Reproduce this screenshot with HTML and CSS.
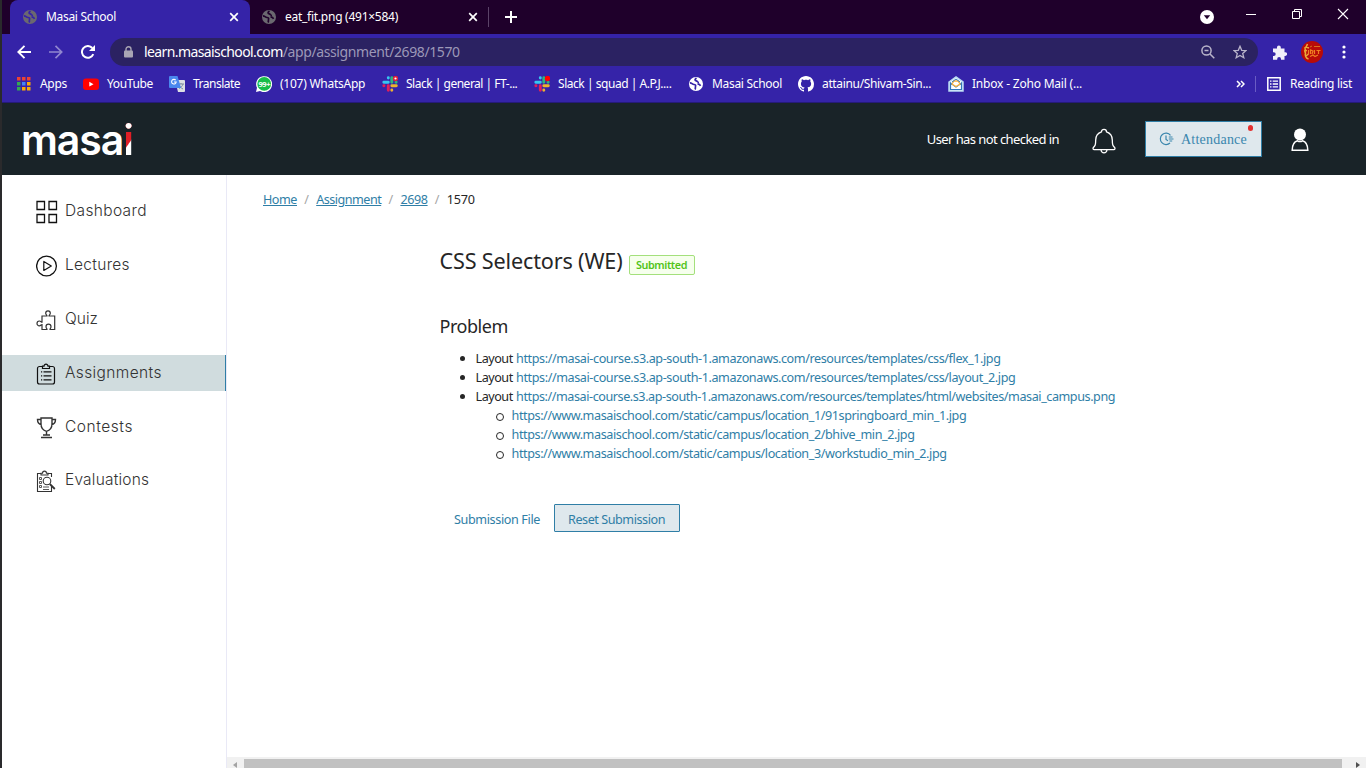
FILE: index.html
```html
<!DOCTYPE html>
<html lang="en">
<head>
<meta charset="utf-8">
<title>Masai School</title>
<link rel="stylesheet" href="styles.css">
</head>
<body>
<svg class="defs" width="0" height="0">
  <defs>
    <symbol id="globe" viewBox="0 0 14 14"><circle cx="7" cy="7" r="7" fill="currentColor"/><path d="M1 5.800c1.800 0 2.300 1.700 4 1.700 1.300 0 2 .8 1.500 2M7.500 1c-2 1.300-1.800 2.600-.3 2.900 1.400.3 1.400 1.500 2.800 1.600M6.500 9.500c-.3 1 .2 2-.5 3M8.500 7.200c1.500-.3 2.500.4 3 1.600" fill="none" stroke="var(--cut)" stroke-width="1.700"/></symbol>
    <symbol id="cross" viewBox="0 0 10 10"><path d="M1.200 1.200l7.600 7.600M8.800 1.200L1.200 8.800" stroke="#fff" stroke-width="1.700"/></symbol>
    <symbol id="slack" viewBox="0 0 16 16"><g fill="none" stroke-width="2.900" stroke-linecap="round"><path d="M1.800 6.300h4.500M6.300 1.800v.2" stroke="#36c5f0"/><path d="M9.800 1.800v4.500M14 6.300h.2" stroke="#2eb67d"/><path d="M9.800 9.800h4.500M9.800 14v.2" stroke="#ecb22e"/><path d="M6.300 9.800v4.500M1.800 9.800H2" stroke="#e01e5a"/></g></symbol>
  </defs>
</svg>
<div class="window">
  <header class="tabs">
    <div class="tab active"><svg class="fav on-active"><use href="#globe"/></svg><span class="t t-tab1">Masai School</span><svg class="close"><use href="#cross"/></svg></div>
    <div class="tab second"><svg class="fav"><use href="#globe"/></svg><span class="t t-tab2">eat_fit.png (491×584)</span><svg class="close"><use href="#cross"/></svg></div>
    <i class="tab-sep"></i>
    <svg class="plus" viewBox="0 0 12 12"><path d="M6 0v12M0 6h12" stroke="#fff" stroke-width="2"/></svg>
    <div class="controls">
      <svg class="c-menu" viewBox="0 0 14 14"><circle cx="7" cy="7" r="7" fill="#fff"/><path d="M3.800 5.200h6.400L7 9.300z" fill="#1f002b"/></svg>
      <svg class="c-min" viewBox="0 0 10 14"><path d="M0 7.500h10" stroke="#fff"/></svg>
      <svg class="c-max" viewBox="0 0 10 14"><path d="M.5 4.500h7v7h-7zM2.500 4.500v-2h7v7h-2" fill="none" stroke="#fff"/></svg>
      <svg class="c-close" viewBox="0 0 12 14"><path d="M1 2l10 10M11 2L1 12" stroke="#fff" stroke-width="1.100"/></svg>
    </div>
  </header>
  <nav class="toolbar">
    <svg class="nav-ic" viewBox="0 0 14 14"><path d="M14 7H1.500M7.500.800L1.300 7l6.200 6.200" fill="none" stroke="#fff" stroke-width="1.900"/></svg>
    <svg class="nav-ic dim" viewBox="0 0 14 14"><path d="M0 7h12.500M6.500.800L12.700 7l-6.200 6.200" fill="none" stroke="#fff" stroke-width="1.700"/></svg>
    <svg class="nav-ic" viewBox="0 0 14 14"><path d="M12.300 9.200A5.900 5.900 0 1 1 11.300 3" fill="none" stroke="#fff" stroke-width="2"/><path d="M14 0v6H8z" fill="#fff"/></svg>
    <div class="omnibox">
      <svg class="lock" viewBox="0 0 9 12"><path d="M2 5V3.200a2.500 2.500 0 0 1 5 0V5" fill="none" stroke="#a9a5b4" stroke-width="1.400"/><rect y="4.500" width="9" height="7" rx="1" fill="#a9a5b4"/></svg>
      <span class="url"><span class="t t-host">learn.masaischool.com</span><span class="t t-path">/app/assignment/2698/1570</span></span>
      <svg class="mag" viewBox="0 0 14 14"><circle cx="5.500" cy="5.500" r="4.600" fill="none" stroke="#b9b4ca" stroke-width="1.500"/><path d="M3.500 5.500h4M9 9l4.300 4.300" stroke="#b9b4ca" stroke-width="1.500"/></svg>
      <svg class="star" viewBox="0 0 14 14"><path d="M7 1.300l1.700 4 4.300.3-3.300 2.800 1.100 4.300L7 10.400l-3.800 2.300 1.100-4.300L1 5.600l4.300-.3z" fill="none" stroke="#b9b4ca" stroke-width="1.300"/></svg>
    </div>
    <svg class="puzzle" viewBox="0 0 15 15"><path d="M1 3.500h4V2.300a1.900 1.900 0 0 1 3.800 0v1.200h3.700v3.700h.7a1.900 1.900 0 0 1 0 3.800h-.7v3.700H9v-.8a1.900 1.900 0 0 0-3.800 0v.8H1V11h.8a1.900 1.900 0 0 0 0-3.800H1z" fill="#f1effa"/></svg>
    <svg class="avatar" viewBox="0 0 22 22"><circle cx="11" cy="11" r="11" fill="#b80b08"/><path d="M6.500 3c-1 2-.8 3-2.500 4 1 2-1 3 .5 5 -.5 2 0 5 3 6M3 10l3-.5M5 15l2.500-2M5 6l3 1" fill="none" stroke="#e9a93a" stroke-width="1.600"/><path d="M9 6l2-1M13 5.500h6" stroke="#d9701b"/><path d="M7.500 9v4M9.500 13V9l2.500 1-1 3M13.500 9v4M15.500 9.500h4M17.500 9v4M9 15.500l3-1.500 2 1.500 3-1.500" fill="none" stroke="#f07f22" stroke-width="1.200"/></svg>
    <svg class="kebab" viewBox="0 0 4 14"><g fill="#fff"><circle cx="2" cy="2" r="1.600"/><circle cx="2" cy="7" r="1.600"/><circle cx="2" cy="12" r="1.600"/></g></svg>
  </nav>
  <nav class="bookmarks">
    <a class="bm b1"><svg viewBox="0 0 14 14"><g fill="#ea4335"><path d="M0 0h3.500v3.500H0zM5 0h3.500v3.500H5zM10 0h3.500v3.500H10z"/></g><path d="M0 5h3.500v3.500H0zM0 10h3.500v3.500H0z" fill="#34a853"/><path d="M5 5h3.500v3.500H5z" fill="#4285f4"/><path d="M5 10h3.500v3.500H5zM10 5h3.500v3.500H10zM10 10h3.500v3.500H10z" fill="#fbab05"/></svg><span class="t t-b1">Apps</span></a>
    <a class="bm b2"><svg viewBox="0 0 16 16"><rect y="2.500" width="16" height="11.500" rx="3" fill="#f00"/><path d="M6.300 5.800l4.200 2.400-4.200 2.400z" fill="#fff"/></svg><span class="t t-b2">YouTube</span></a>
    <a class="bm b3"><svg viewBox="0 0 16 16"><path d="M6 4h9a1 1 0 0 1 1 1v10a1 1 0 0 1-1 1H9z" fill="#dcdfe3"/><path d="M9 8h6M12 7v1M14 8c-.5 2-2 3.500-4 4.500M10 9c.6 1.500 2 3 4 4" fill="none" stroke="#7e8da0"/><path d="M1 0h7.500L12 12H1a1 1 0 0 1-1-1V1a1 1 0 0 1 1-1z" fill="#4a88ee"/><path d="M6.700 4.200A2.300 2.300 0 1 0 7.200 6H5" fill="none" stroke="#fff" stroke-width="1.100"/></svg><span class="t t-b3">Translate</span></a>
    <a class="bm b4"><svg viewBox="0 0 16 16"><path d="M0 16l1-4.200A8 8 0 1 1 4 15z" fill="#fff"/><circle cx="8.200" cy="7.900" r="6.900" fill="#18bd49"/><text x="8.300" y="10.800" class="badge-num">99+</text></svg><span class="t t-b4">(107) WhatsApp</span></a>
    <a class="bm b5"><svg viewBox="0 0 16 16"><use href="#slack"/><circle cx="13.500" cy="2.500" r="2.700" fill="#e01e3a"/><circle cx="13.500" cy="2.500" r="1.100" fill="#fff"/></svg><span class="t t-b5">Slack | general | FT-...</span></a>
    <a class="bm b6"><svg viewBox="0 0 16 16"><use href="#slack"/><circle cx="13.500" cy="2.500" r="2.700" fill="#f00"/></svg><span class="t t-b6">Slack | squad | A.P.J....</span></a>
    <a class="bm b7"><svg class="on-active" viewBox="0 0 14 14"><use href="#globe"/></svg><span class="t t-tab1">Masai School</span></a>
    <a class="bm b8"><svg viewBox="0 0 16 16"><path fill="#fff" d="M8 0C3.580 0 0 3.580 0 8c0 3.540 2.290 6.530 5.470 7.590.4.070.55-.17.55-.38 0-.19-.01-.82-.01-1.490-2.010.37-2.530-.49-2.690-.94-.09-.23-.48-.94-.82-1.130-.28-.15-.68-.52-.01-.53.63-.01 1.080.58 1.230.82.72 1.210 1.870.87 2.330.66.07-.52.28-.87.51-1.070-1.780-.2-3.640-.89-3.640-3.950 0-.87.31-1.590.82-2.150-.08-.2-.36-1.020.08-2.120 0 0 .67-.21 2.200.82.64-.18 1.320-.27 2-.27s1.360.09 2 .27c1.530-1.040 2.200-.82 2.200-.82.44 1.100.16 1.920.08 2.120.51.56.82 1.270.82 2.150 0 3.070-1.870 3.750-3.650 3.950.29.25.54.73.54 1.480 0 1.070-.01 1.930-.01 2.200 0 .21.15.46.55.38A8 8 0 0 0 16 8c0-4.420-3.580-8-8-8z"/></svg><span class="t t-b8">attainu/Shivam-Sin...</span></a>
    <a class="bm b9"><svg viewBox="0 0 16 16"><path d="M1 6l7-5 7 5v9H1z" fill="#fff" stroke="#b9dcf3" stroke-width="1.500"/><path d="M2.500 7v6.500h11V7L8 11z" fill="#fff" stroke="#3179bd" stroke-width="1.200"/><path d="M4 8l2-3h4l2 3-4 2.500z" fill="#fff" stroke="#f6b13d" stroke-width="1.300"/><path d="M4 6l4-3 4 3" fill="none" stroke="#3179bd"/></svg><span class="t t-b9">Inbox - Zoho Mail (...</span></a>
    <div class="bm-end">
      <svg class="more" viewBox="0 0 9 8"><path d="M1 1l3 3-3 3M5 1l3 3-3 3" fill="none" stroke="#fff" stroke-width="1.500"/></svg>
      <i class="bm-sep"></i>
      <svg class="rl" viewBox="0 0 14 14"><path d="M.8.800h12.400v12.400H.8z" fill="none" stroke="#fff" stroke-width="1.500"/><path d="M3 4.200h1.500M3 7h1.500M3 9.800h1.500M5.700 4.200H11M5.700 7H11M5.700 9.800H11" stroke="#fff" stroke-width="1.300"/></svg>
      <span class="t t-rl">Reading list</span>
    </div>
  </nav>
  <header class="app-bar">
    <div class="logo"><span class="t">masa<span class="logo-i">i</span></span></div>
    <div class="app-right">
      <span class="t t-check">User has not checked in</span>
      <svg class="bell" viewBox="0 0 24 26"><path d="M9.500 3.800a2.500 2.500 0 0 1 5 0c4 1.300 5.800 4.500 5.800 8.200 0 5 .6 5.700 2.300 7.500.8 1 .3 2.200-.8 2.200H2.200c-1.100 0-1.600-1.200-.8-2.200C3.100 17.700 3.700 17 3.700 12c0-3.700 1.800-6.900 5.800-8.200zM9 22c.3 1.800 1.300 2.800 3 2.800s2.700-1 3-2.800" fill="none" stroke="#fff" stroke-width="1.300"/></svg>
      <div class="attend"><svg viewBox="0 0 15 14"><path d="M11.500 3.300A5.700 5.700 0 1 0 11 11M7 3.500v4l2 1.200M9.800 5h3.700M9.800 7h4.700M10.500 9h2.700" fill="none" stroke="#3a86ad" stroke-width="1.200"/></svg><span class="t t-att">Attendance</span><i class="dot"></i></div>
      <svg class="user" viewBox="0 0 18 24"><circle cx="9" cy="6.500" r="6" fill="#fff"/><path d="M1.200 22.300c0-5 2-8.500 5.300-9.500 1.600 1 3.400 1 5 0 3.300 1 5.300 4.500 5.300 9.500z" fill="none" stroke="#fff" stroke-width="1.500"/></svg>
    </div>
  </header>
  <div class="body">
    <aside class="side">
      <a class="item low"><svg viewBox="0 0 22 24"><path d="M1 1.500h7.500v8H1zM13 1.500h7.500v8H13zM1 14.500h7.500v8H1zM13 14.500h7.500v8H13z" fill="none" stroke="#111" stroke-width="1.300"/></svg><span class="t t-s1">Dashboard</span></a>
      <a class="item low"><svg viewBox="0 0 22 24"><circle cx="10.500" cy="12" r="9.900" fill="none" stroke="#111" stroke-width="1.300"/><path d="M7.800 7.500v9l7.500-4.500z" fill="none" stroke="#111" stroke-width="1.200" stroke-linejoin="round"/></svg><span class="t t-s2">Lectures</span></a>
      <a class="item low"><svg viewBox="0 0 22 24"><path d="M6 8h5c0-1-1.300-1.200-1.300-2.800a2.300 2.300 0 0 1 4.600 0C14.300 6.800 13 7 13 8h5.700v13.500H14c0-1 1-1.200 1-2.800a2.500 2.500 0 0 0-5 0c0 1.600 1 1.800 1 2.800H6v-5c-.8 0-1.200 1.300-2.600 1.300a2.400 2.400 0 0 1 0-4.800c1.400 0 1.800 1.200 2.600 1.200z" fill="none" stroke="#333" stroke-width="1.200"/></svg><span class="t">Quiz</span></a>
      <a class="item sel low"><svg viewBox="0 0 22 24"><path d="M6 4.500H3.500a2 2 0 0 0-2 2V20a2 2 0 0 0 2 2h13a2 2 0 0 0 2-2V6.500a2 2 0 0 0-2-2H14M6.500 6.500h7V4.200h-1.500c0-2.800-4-2.800-4 0H6.500z" fill="none" stroke="#111" stroke-width="1.200"/><path d="M5 9.800h1.200M5 13.800h1.200M5 17.800h1.200M7.500 9.800h8M7.500 13.800h8M7.500 17.800h8" stroke="#111" stroke-width="1.200"/></svg><span class="t t-s4">Assignments</span></a>
      <a class="item low"><svg viewBox="0 0 22 24"><path d="M5 2h11v6c0 4-2 6.300-5.500 7.300C7 14.300 5 12 5 8zM5 3.500H1.500C1.500 7 3 8.200 5.500 8.500M16 3.500h3.500c0 3.500-1.500 4.700-4 5M10.500 15.300V19M7 19h7M5 21.500h11" fill="none" stroke="#333" stroke-width="1.400"/></svg><span class="t t-s5">Contests</span></a>
      <a class="item low last"><svg viewBox="0 0 22 24"><path d="M5 4.500H1.500v18h14V17M15.500 8V4.500H12M5 6h7V4.200h-1.500c0-2.800-4-2.800-4 0H5z" fill="none" stroke="#333" stroke-width="1.100"/><path d="M3.500 8.500h2v2h-2zM3.500 12.500h2v2h-2zM3.500 16.500h2v2h-2zM7 18h6M7 20.500h6" fill="none" stroke="#444" stroke-width=".9"/><circle cx="11" cy="12" r="3.800" fill="none" stroke="#333" stroke-width="1.100"/><path d="M13.800 15l5 5" stroke="#333" stroke-width="1.800"/></svg><span class="t t-s6">Evaluations</span></a>
    </aside>
    <main class="main">
      <div class="crumbs"><a class="t t-c1">Home</a><i>/</i><a class="t t-c2">Assignment</a><i>/</i><a class="t t-c3">2698</a><i>/</i><span class="t t-c4">1570</span></div>
      <section class="article">
        <div class="title-row"><h1><span class="t t-h1">CSS Selectors (WE)</span></h1><span class="tag"><span class="t t-tag">Submitted</span></span></div>
        <h2><span class="t t-h2">Problem</span></h2>
        <ul>
          <li><span class="t t-l0">Layout</span> <a class="t t-l1">https://masai-course.s3.ap-south-1.amazonaws.com/resources/templates/css/flex_1.jpg</a></li>
          <li><span class="t t-l0">Layout</span> <a class="t t-l1">https://masai-course.s3.ap-south-1.amazonaws.com/resources/templates/css/layout_2.jpg</a></li>
          <li><span class="t t-l0">Layout</span> <a class="t t-l3">https://masai-course.s3.ap-south-1.amazonaws.com/resources/templates/html/websites/masai_campus.png</a>
            <ul>
              <li><a class="t t-l4">https://www.masaischool.com/static/campus/location_1/91springboard_min_1.jpg</a></li>
              <li><a class="t t-l4">https://www.masaischool.com/static/campus/location_2/bhive_min_2.jpg</a></li>
              <li><a class="t t-l4">https://www.masaischool.com/static/campus/location_3/workstudio_min_2.jpg</a></li>
            </ul>
          </li>
        </ul>
        <div class="actions"><a class="t t-a1">Submission File</a><a class="btn"><span class="t t-a2">Reset Submission</span></a></div>
      </section>
      <div class="hscroll"><i class="arr left"></i><i class="thumb"></i><i class="arr right"></i></div>
    </main>
  </div>
</div>
</body>
</html>
```
FILE: styles.css
```css
* { box-sizing: border-box; }
body { margin: 0; width: 1366px; height: 768px; overflow: hidden; font-family: "Noto Sans", sans-serif; background: #2a2a2c; }
.defs { position: absolute; }
svg { display: block; flex: none; }
.t { white-space: nowrap; }
.window { width: 1364px; height: 768px; margin-left: 2px; display: flex; flex-direction: column; background: #fff; }

/* tab strip */
.tabs { height: 34px; background: #1f002b; display: flex; align-items: center; padding-left: 8px; color: #fff; font-size: 12px; flex: none; }
.tab { display: flex; align-items: center; width: 240px; height: 34px; padding: 0 11px 0 13px; }
.tab.active { background: #3523a8; border-radius: 8px 8px 0 0; }
.tab.second { width: 239px; padding: 0 11px 0 12px; }
.tab .t { padding-bottom: 1px; }
.fav { width: 14px; height: 14px; margin-right: 9px; color: #6b6870; --cut: #1f002b; }
.on-active { --cut: #3523a8; }
.t-tab1 { letter-spacing: -.31px; }
.t-tab2 { letter-spacing: -.26px; }
.close { width: 10px; height: 10px; margin-left: auto; }
.tab-sep { width: 1px; height: 20px; background: #5b4368; margin: 0 16px 0 -1px; }
.plus { width: 12px; height: 12px; }
.controls { margin-left: auto; display: flex; align-items: center; padding-right: 17px; height: 28px; }
.c-menu { width: 14px; height: 14px; margin: 0 32px 0 0; }
.c-min { width: 10px; height: 14px; margin: -6px 36px 0 0; }
.c-max { width: 10px; height: 14px; margin: -6px 35px 0 0; }
.c-close { width: 12px; height: 14px; margin-top: -6px; }

/* toolbar */
.toolbar { height: 36px; background: #3523a8; display: flex; align-items: center; flex: none; padding-left: 15px; }
.nav-ic { width: 14px; height: 14px; margin-right: 18px; }
.dim { opacity: .45; }
.omnibox { width: 1148px; height: 28px; border-radius: 14px; background: #2b2262; display: flex; align-items: center; padding: 0 11px 0 14px; margin-left: -3px; }
.lock { width: 9px; height: 12px; margin-right: 11px; }
.url { font-size: 14px; line-height: 18px; color: #fff; flex: 1; display: flex; }
.t-host { letter-spacing: -.6px; }
.t-path { color: #9c98b8; letter-spacing: -.393px; }
.mag { width: 14px; height: 14px; margin-right: 18px; }
.star { width: 14px; height: 14px; }
.puzzle { width: 15px; height: 15px; margin-left: 14px; }
.avatar { width: 22px; height: 22px; margin-left: 14px; }
.kebab { width: 4px; height: 14px; margin-left: 19px; }

/* bookmarks */
.bookmarks { height: 33px; background: #3523a8; border-bottom: 1px solid #251a78; display: flex; align-items: center; color: #fff; font-size: 12px; flex: none; padding: 0 0 4px 15px; }
.bookmarks .t { padding-bottom: 1px; }
.bm { display: flex; align-items: center; }
.bm svg { width: 16px; height: 16px; margin-right: 8px; }
.bm.b1 svg, .bm.b7 svg { width: 14px; height: 14px; margin-right: 9px; }
.b1 { width: 66px; } .b2 { width: 86px; } .b3 { width: 87px; } .b4 { width: 126px; } .b5 { width: 152px; }
.b6 { width: 155px; } .b7 { width: 109px; } .b8 { width: 150px; }
.t-b1 { letter-spacing: -.3px; }
.t-b2 { letter-spacing: -.36px; }
.t-b3 { letter-spacing: -.5px; }
.t-b4 { letter-spacing: -.25px; }
.t-b5 { letter-spacing: -.49px; }
.t-b6 { letter-spacing: -.46px; }
.t-b8 { letter-spacing: -.347px; }
.t-b9 { letter-spacing: -.2px; }
.t-rl { letter-spacing: -.3px; }
.bm-end { margin-left: auto; display: flex; align-items: center; padding-right: 14px; }
.more { width: 9px; height: 8px; }
.bm-sep { width: 1px; height: 16px; background: #6a5cc4; margin: 0 11px 0 10px; }
.rl { width: 14px; height: 14px; margin-right: 9px; }
.badge-num { font: bold 7.5px "Noto Sans", sans-serif; fill: #fff; text-anchor: middle; letter-spacing: -.4px; }

/* application bar */
.app-bar { height: 72px; background: #192328; display: flex; align-items: center; justify-content: space-between; flex: none; color: #fff; }
.logo { padding: 1px 0 0 19px; font: 600 41px/60px Inter, sans-serif; letter-spacing: -1.100px; }
.logo-i { color: transparent; background: linear-gradient(#fff, #fff) 0 0 / 100% 16px no-repeat, linear-gradient(125deg, #e01f26 calc(50% + 1px), #fff calc(50% + 2px)); -webkit-background-clip: text; background-clip: text; padding-right: 3px; }
.app-right { display: flex; align-items: center; font-size: 13px; }
.t-check { letter-spacing: -.58px; }
.bell { width: 24px; height: 26px; margin: 3px 29px 0 33px; }
.attend { position: relative; width: 117px; height: 36px; border: 1px solid #2f7ea6; background: #dfe8ed; color: #3a86ad; display: flex; align-items: center; padding-left: 13px; }
.attend svg { width: 15px; height: 14px; margin-right: 7px; }
.t-att { font: 14px "Liberation Serif", serif; letter-spacing: .225px; padding-top: 1px; }
.dot { position: absolute; right: 8px; top: 3px; width: 5px; height: 6px; border-radius: 3px; background: #e3302f; }
.user { width: 18px; height: 24px; margin: 2px 57px 0 29px; }

/* sidebar */
.body { display: flex; flex: 1; min-height: 0; }
.side { width: 225px; border-right: 1px solid #e9e9f6; padding-top: 18px; display: flex; flex-direction: column; gap: 18px; font: 300 15.500px/20px Inter, sans-serif; color: #333; }
.item { height: 36px; display: flex; align-items: center; padding-left: 34px; }
.item svg { width: 22px; height: 24px; margin-right: 7px; }
.item.low svg { margin-top: 2px; }
.item.last { margin-top: -1px; }
.item.sel { background: #d0dcde; border-right: 1px solid #2f7ea6; }
.t-s1 { letter-spacing: .36px; }
.t-s2 { letter-spacing: .3px; }
.t-s4 { letter-spacing: .38px; }
.t-s5 { letter-spacing: .55px; }
.t-s6 { letter-spacing: .2px; }

/* content */
.main { flex: 1; display: flex; flex-direction: column; min-width: 0; color: #262626; font-size: 12.600px; line-height: 19px; }
.crumbs { display: flex; padding: 15px 0 0 36px; }
.crumbs a { color: #2f7ea6; text-decoration: underline; }
.crumbs i { font-style: normal; color: #a5a5a5; width: 19.200px; text-align: center; }
.t-c1 { letter-spacing: -.46px; }
.t-c2 { letter-spacing: -.51px; }
.t-c3 { letter-spacing: -.4px; }
.t-c4 { letter-spacing: -.2px; }
.article { padding: 33px 0 0 212.500px; flex: 1; }
.title-row { display: flex; align-items: center; height: 38px; }
h1 { margin: 0; font-weight: 400; font-size: 21.600px; line-height: 38px; }
.t-h1 { letter-spacing: -.16px; }
.tag { margin: 7px 0 0 6px; border: 1px solid #a4e07c; background: #f6ffed; color: #52c41a; border-radius: 2px; height: 20px; width: 66px; display: flex; align-items: center; justify-content: center; font-size: 10.800px; font-weight: 600; }
.t-tag { letter-spacing: -.43px; }
h2 { margin: 32px 0 0; font-weight: 400; font-size: 18px; line-height: 28px; }
.t-h2 { letter-spacing: -.45px; }
ul { margin: 9px 0 0; padding-left: 36px; list-style: none; }
ul ul { margin: 0; }
li { position: relative; white-space: nowrap; height: 19px; }
li::before { content: ""; position: absolute; left: -15.500px; top: 7px; width: 5px; height: 5px; border-radius: 50%; background: #262626; }
ul ul li::before { left: -15.500px; width: 6px; height: 6px; background: none; border: 1px solid #262626; }
li a, .actions { color: #2f7ea6; }
.t-l0 { letter-spacing: -.46px; }
.t-l1 { letter-spacing: -.408px; }
.t-l3 { letter-spacing: -.433px; }
.t-l4 { letter-spacing: -.405px; }
.t-a1 { letter-spacing: -.374px; }
.t-a2 { letter-spacing: -.442px; }
.actions { display: flex; align-items: center; padding-left: 14.500px; margin-top: 98px; }
.actions .t { padding-top: 2px; }
.btn { margin-left: 13.500px; border: 1px solid #2f7ea6; background: #dfe8ed; height: 28px; width: 126px; display: flex; align-items: center; justify-content: center; border-radius: 1px; }

/* horizontal scrollbar */
.hscroll { height: 11px; background: #f1f1f1; display: flex; align-items: flex-end; padding: 0 6px; }
.thumb { flex: 1; height: 9px; background: #c1c1c1; margin: 0 14px 0 7px; }
.arr { width: 4px; height: 6px; background: #a3a3a3; clip-path: polygon(0 50%, 100% 0, 100% 100%); }
.arr.right { background: #505050; clip-path: polygon(0 0, 100% 50%, 0 100%); }
```
